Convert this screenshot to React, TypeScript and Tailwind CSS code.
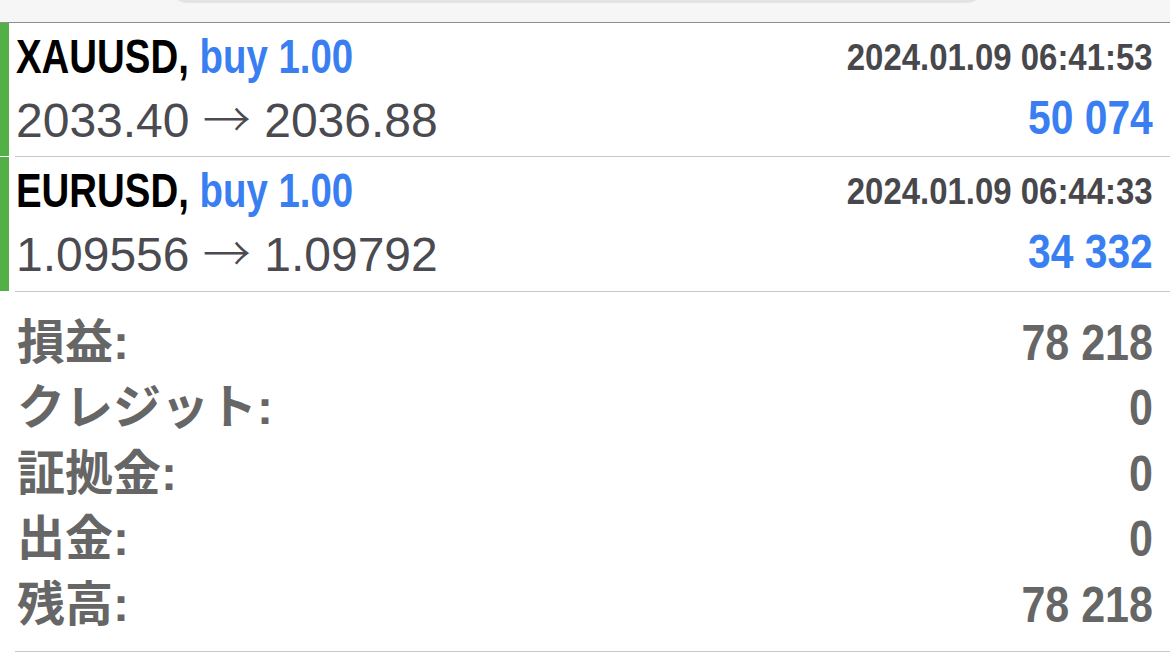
import React from 'react';

const positions = [
  { symbol: 'XAUUSD,', side: 'buy 1.00', time: '2024.01.09 06:41:53', open: '2033.40', close: '2036.88', profit: '50 074', h: 'h-[133px]' },
  { symbol: 'EURUSD,', side: 'buy 1.00', time: '2024.01.09 06:44:33', open: '1.09556', close: '1.09792', profit: '34 332', h: 'h-[134px]' },
];

const summary = [
  { label: '損益:', value: '78 218' },
  { label: 'クレジット:', value: '0' },
  { label: '証拠金:', value: '0' },
  { label: '出金:', value: '0' },
  { label: '残高:', value: '78 218' },
];

// no condensed face installed, so squeeze Liberation Sans Bold horizontally
const sans = "font-['Liberation_Sans',sans-serif]";

export default function App() {
  return (
    <div className="w-[1170px] h-[671px] bg-white overflow-hidden">
      {/* search bar peeking from above */}
      <div className="h-[23px] bg-[#f6f6f6] border-b border-[#8e8e8e] overflow-hidden">
        <div className="ml-[168px] w-[818px] h-[40px] -mt-[37px] rounded-[22px] bg-[#e3e3e5]" />
      </div>

      {positions.map((p) => (
        <div key={p.symbol}>
          <div className={`flex ${p.h}`}>
            <div className="w-[9px] bg-[#52b047]" />
            <div className="flex-1 ml-[7px] pr-[17px] pt-[3px] flex flex-col">
              <div className="h-[62px] flex items-center justify-between">
                <div className={`${sans} font-bold text-[48px] leading-none whitespace-nowrap origin-left scale-x-[0.8]`}>
                  <span className="text-black">{p.symbol}</span>{' '}
                  <span className="text-[#3a7ff2]">{p.side}</span>
                </div>
                <div className={`${sans} font-bold text-[37px] leading-none whitespace-nowrap text-[#47474c] origin-right scale-x-[0.89]`}>
                  {p.time}
                </div>
              </div>
              <div className="h-[60px] flex items-center justify-between">
                <div className={`${sans} text-[48px] leading-none whitespace-nowrap text-[#4a4a50]`}>
                  {p.open}{' '}
                  <span className="font-['Noto_Sans_CJK_JP',sans-serif] font-light">→</span>{' '}
                  {p.close}
                </div>
                <div className={`${sans} font-bold text-[48px] leading-none whitespace-nowrap text-[#3a7ff2] origin-right scale-x-[0.85]`}>
                  {p.profit}
                </div>
              </div>
            </div>
          </div>
          <div className="ml-[15px] h-px bg-[#c8c8c8]" />
        </div>
      ))}

      <div className="pl-[17px] pr-[17px] pt-[18px] pb-[13px]">
        {summary.map((s) => (
          <div key={s.label} className="h-[65.5px] flex items-center justify-between text-[#666666]">
            <span className="font-['Liberation_Sans','Noto_Sans_CJK_JP',sans-serif] font-bold text-[48px] leading-none">
              {s.label}
            </span>
            <div className={`${sans} font-bold text-[50px] leading-none whitespace-nowrap origin-right scale-x-[0.86]`}>
              {s.value}
            </div>
          </div>
        ))}
      </div>
      <div className="ml-[15px] h-px bg-[#c8c8c8]" />
    </div>
  );
}
